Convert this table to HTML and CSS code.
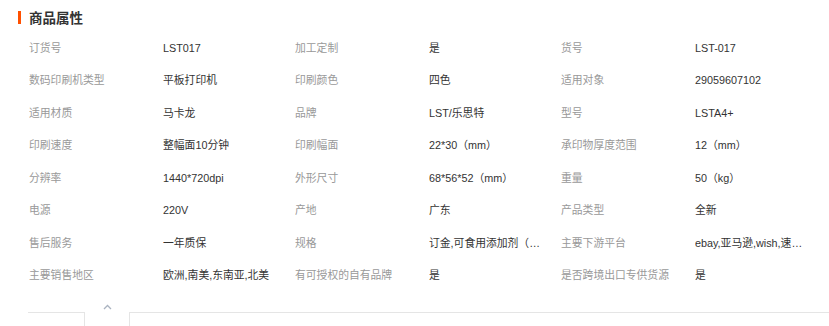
FILE: index.html
```html
<!DOCTYPE html>
<html lang="zh-CN">
<head>
<meta charset="utf-8">
<title>商品属性</title>
<link rel="stylesheet" href="styles.css">
</head>
<body>
<div class="page">
  <div class="title"><span class="bar"></span><h2>商品属性</h2></div>
  <div class="attrs">
    <div class="k">订货号</div><div class="v">LST017</div>
    <div class="k">加工定制</div><div class="v">是</div>
    <div class="k">货号</div><div class="v">LST-017</div>

    <div class="k">数码印刷机类型</div><div class="v">平板打印机</div>
    <div class="k">印刷颜色</div><div class="v">四色</div>
    <div class="k">适用对象</div><div class="v">29059607102</div>

    <div class="k">适用材质</div><div class="v">马卡龙</div>
    <div class="k">品牌</div><div class="v">LST/乐思特</div>
    <div class="k">型号</div><div class="v">LSTA4+</div>

    <div class="k">印刷速度</div><div class="v">整幅面10分钟</div>
    <div class="k">印刷幅面</div><div class="v">22*30（mm）</div>
    <div class="k">承印物厚度范围</div><div class="v">12（mm）</div>

    <div class="k">分辨率</div><div class="v">1440*720dpi</div>
    <div class="k">外形尺寸</div><div class="v">68*56*52（mm）</div>
    <div class="k">重量</div><div class="v">50（kg）</div>

    <div class="k">电源</div><div class="v">220V</div>
    <div class="k">产地</div><div class="v">广东</div>
    <div class="k">产品类型</div><div class="v">全新</div>

    <div class="k">售后服务</div><div class="v">一年质保</div>
    <div class="k">规格</div><div class="v" title="订金,可食用添加剂（可食用墨水）">订金,可食用添加剂（可食用墨水）</div>
    <div class="k">主要下游平台</div><div class="v" title="ebay,亚马逊,wish,速卖通">ebay,亚马逊,wish,速卖通</div>

    <div class="k">主要销售地区</div><div class="v">欧洲,南美,东南亚,北美</div>
    <div class="k">有可授权的自有品牌</div><div class="v">是</div>
    <div class="k">是否跨境出口专供货源</div><div class="v">是</div>
  </div>
  <div class="fold">
    <div class="fold-left"></div>
    <div class="fold-tab">
      <svg class="chev" width="9" height="6" viewBox="0 0 9 6"><polyline points="1,5 4.5,1.5 8,5" fill="none" stroke="#aab3c0" stroke-width="1.3"/></svg>
    </div>
    <div class="fold-right"></div>
  </div>
</div>
</body>
</html>
```

FILE: styles.css
```css
html, body {
  margin: 0;
  padding: 0;
  background: #fff;
}
.page {
  width: 829px;
  height: 326px;
  overflow: hidden;
  font-family: "Liberation Sans", "Noto Sans CJK SC", sans-serif;
  font-size: 10.8px;
  color: #333;
}
.title {
  display: flex;
  align-items: center;
  padding: 8px 0 0 18px;
  height: 18px;
}
.bar {
  width: 3px;
  height: 13px;
  background: #ff5000;
  margin-right: 8px;
}
.title h2 {
  margin: 0;
  font-size: 13.5px;
  font-weight: bold;
  color: #333;
  line-height: 18px;
  font-family: "Noto Sans CJK SC", sans-serif;
}
.attrs {
  display: grid;
  grid-template-columns: 134px 132px 134px 132px 134px 132px;
  grid-auto-rows: 32.43px;
  margin: 6px 0 0 29px;
}
.k, .v {
  line-height: 32.43px;
  white-space: nowrap;
  overflow: hidden;
  text-overflow: ellipsis;
}
.k {
  color: #999;
  max-width: 126px;
}
.v {
  color: #333;
  max-width: 114px;
}
.fold {
  display: flex;
  margin: 21px 0 0 28px;
  height: 14px;
}
.fold-left {
  width: 56px;
  border-top: 1px solid #e5e5e5;
  border-right: 1px solid #e5e5e5;
}
.fold-tab {
  width: 44px;
  position: relative;
}
.chev {
  position: absolute;
  left: 18px;
  top: -8px;
}
.fold-right {
  flex: 1;
  border-top: 1px solid #e5e5e5;
  border-left: 1px solid #e5e5e5;
}
```
